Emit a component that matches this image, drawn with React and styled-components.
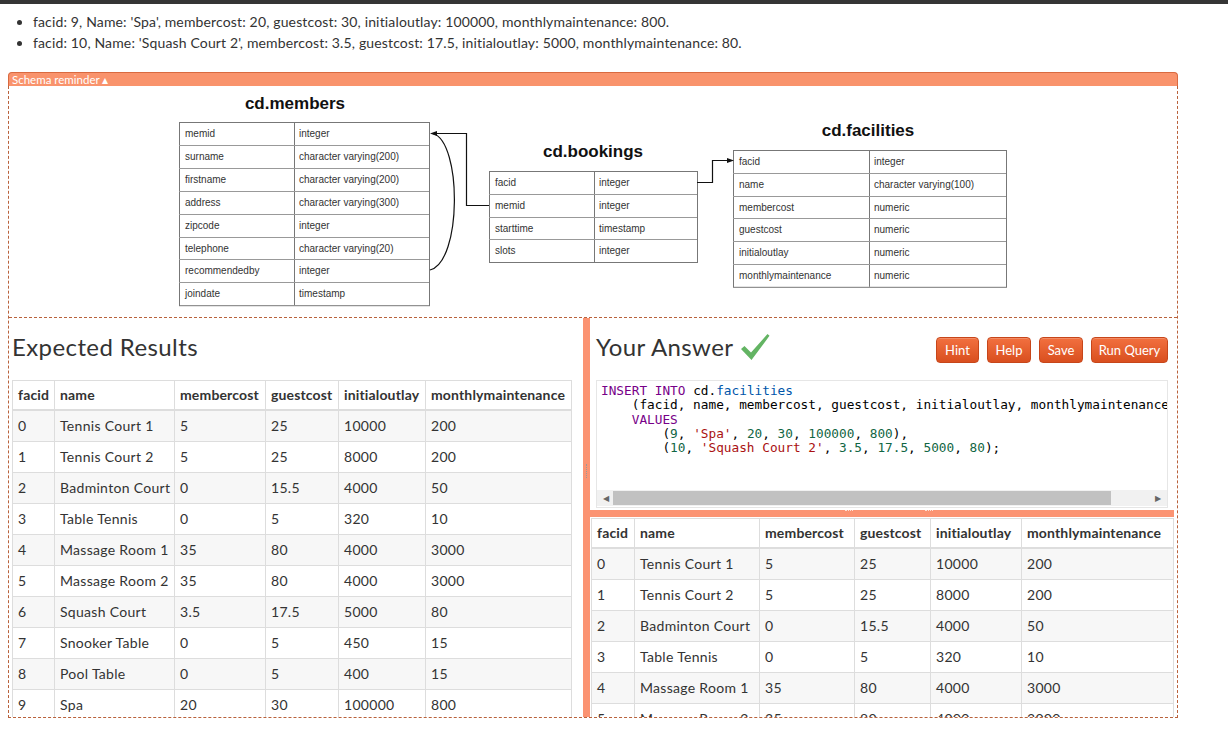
import React from "react";
import styled, { createGlobalStyle } from "styled-components";

const GlobalStyle = createGlobalStyle`
  body {
    margin: 0;
    background: #fff;
    font-family: Lato, "Noto Sans", sans-serif;
    color: #333;
  }
`;

const members = [
  ["memid", "integer"],
  ["surname", "character varying(200)"],
  ["firstname", "character varying(200)"],
  ["address", "character varying(300)"],
  ["zipcode", "integer"],
  ["telephone", "character varying(20)"],
  ["recommendedby", "integer"],
  ["joindate", "timestamp"],
];

const bookings = [
  ["facid", "integer"],
  ["memid", "integer"],
  ["starttime", "timestamp"],
  ["slots", "integer"],
];

const facilities = [
  ["facid", "integer"],
  ["name", "character varying(100)"],
  ["membercost", "numeric"],
  ["guestcost", "numeric"],
  ["initialoutlay", "numeric"],
  ["monthlymaintenance", "numeric"],
];

const rows = [
  [0, "Tennis Court 1", 5, 25, 10000, 200],
  [1, "Tennis Court 2", 5, 25, 8000, 200],
  [2, "Badminton Court", 0, 15.5, 4000, 50],
  [3, "Table Tennis", 0, 5, 320, 10],
  [4, "Massage Room 1", 35, 80, 4000, 3000],
  [5, "Massage Room 2", 35, 80, 4000, 3000],
  [6, "Squash Court", 3.5, 17.5, 5000, 80],
  [7, "Snooker Table", 0, 5, 450, 15],
  [8, "Pool Table", 0, 5, 400, 15],
  [9, "Spa", 20, 30, 100000, 800],
  [10, "Squash Court 2", 3.5, 17.5, 5000, 80],
];

const headers = ["facid", "name", "membercost", "guestcost", "initialoutlay", "monthlymaintenance"];

const SchemaTable = ({ title, tx, ty, x, y, w, split, rowH, data }) => (
  <g>
    <text x={tx} y={ty} textAnchor="middle" fontFamily="Liberation Sans, Arial, sans-serif" fontWeight="bold" fontSize="17" fill="#111">
      {title}
    </text>
    <rect x={x + 0.5} y={y + 0.5} width={w} height={rowH * data.length} fill="#fff" stroke="#777" />
    <line x1={split + 0.5} y1={y} x2={split + 0.5} y2={y + rowH * data.length} stroke="#777" />
    {data.map((r, i) => (
      <g key={r[0]}>
        {i > 0 && <line x1={x} y1={Math.round(y + rowH * i) + 0.5} x2={x + w} y2={Math.round(y + rowH * i) + 0.5} stroke="#999" />}
        <text x={x + 6} y={y + rowH * i + 15} fontFamily="Liberation Sans, Arial, sans-serif" fontSize="10" fill="#333">{r[0]}</text>
        <text x={split + 5} y={y + rowH * i + 15} fontFamily="Liberation Sans, Arial, sans-serif" fontSize="10" fill="#333">{r[1]}</text>
      </g>
    ))}
  </g>
);

const SchemaDiagram = () => (
  <svg width="1168" height="231" viewBox="9 86 1168 231">
    <SchemaTable title="cd.members" tx={295} ty={109} x={179} y={122} w={250} split={294} rowH={22.9} data={members} />
    <SchemaTable title="cd.bookings" tx={593} ty={157} x={489} y={171} w={208} split={594} rowH={22.75} data={bookings} />
    <SchemaTable title="cd.facilities" tx={868} ty={136} x={733} y={150} w={273} split={869} rowH={22.8} data={facilities} />
    <path d="M489 205.5 H466.5 V133.5 H436" fill="none" stroke="#111" strokeWidth="1.2" />
    <path d="M430 133.5 L437 131 L437 136 Z" fill="#111" />
    <path d="M430 270 C462 262 462 142 433 133.5" fill="none" stroke="#111" strokeWidth="1.2" />
    <path d="M697 182.5 H712.5 V160.5 H728" fill="none" stroke="#111" strokeWidth="1.2" />
    <path d="M734 160.5 L727 158 L727 163 Z" fill="#111" />
  </svg>
);

const Page = styled.div`
  width: 1228px;
  height: 735px;
  overflow: hidden;
`;

const TopBar = styled.div`
  height: 4px;
  background: #353535;
`;

const Goals = styled.ul`
  margin: 0;
  padding: 7px 0 0 33px;
  font-size: 14px;
  line-height: 21px;
  letter-spacing: 0.15px;
`;

const SchemaBar = styled.div`
  margin: 19px 0 0 8px;
  width: 1170px;
  height: 14px;
  box-sizing: border-box;
  background: #f9936c;
  border: 1px solid #d96a40;
  border-bottom: none;
  border-radius: 4px 4px 0 0;
  color: #fff;
  font-size: 11.5px;
  line-height: 13px;
  padding-left: 3px;
`;

const Frame = styled.div`
  margin-left: 8px;
  width: 1170px;
  height: 632px;
  box-sizing: border-box;
  border: 1px dashed #b9623c;
  border-top: none;
  overflow: hidden;
`;

const SchemaArea = styled.div`
  height: 231px;
  border-bottom: 1px dashed #b9623c;
`;

const Panes = styled.div`
  display: flex;
  height: 399px;
  overflow: hidden;
`;

const LeftPane = styled.div`
  width: 571px;
  padding-left: 3px;
  position: relative;
`;

const Grip = styled.div`
  position: absolute;
  right: -4px;
  top: 146px;
  height: 14px;
  border-left: 1px dotted #999;
`;

const VSplit = styled.div`
  width: 7px;
  flex-shrink: 0;
  background: #fb9372;
`;

const RightPane = styled.div`
  flex: 1;
  min-width: 0;
`;

const Heading = styled.h2`
  margin: 14px 0 18px;
  font-size: 24px;
  font-weight: 400;
  line-height: 30px;
  letter-spacing: 0.4px;
  color: #333;
`;

const AnswerHead = styled.div`
  display: flex;
  align-items: center;
  justify-content: space-between;
  margin: 14px 9px 18px 6px;
  height: 30px;
`;

const Title = styled.div`
  display: flex;
  align-items: center;
  gap: 7px;
  font-size: 24px;
  line-height: 30px;
  letter-spacing: 0.4px;
`;

const Buttons = styled.div`
  display: flex;
  gap: 8px;
  margin-top: 6px;
`;

const Button = styled.button`
  width: ${({ $w }) => $w}px;
  height: 26px;
  padding: 0;
  font-family: Lato, "Noto Sans", sans-serif;
  font-size: 13px;
  color: #fff;
  background: linear-gradient(#f2703f, #d94f1f);
  border: 1px solid #c7461a;
  border-radius: 4px;
  box-shadow: inset 0 1px 0 rgba(255, 255, 255, 0.2);
`;

const Editor = styled.div`
  margin: 0 9px 0 6px;
  height: 128px;
  box-sizing: border-box;
  border: 1px solid #e6e6e6;
  display: flex;
  flex-direction: column;
  overflow: hidden;
`;

const Code = styled.pre`
  flex: 1;
  margin: 0;
  padding: 3px 4px;
  font-family: "DejaVu Sans Mono", monospace;
  font-size: 12.75px;
  line-height: 14.3px;
  color: #000;
  overflow: hidden;
  white-space: pre;
`;

const Tok = styled.span`
  color: ${({ $c }) => $c};
`;

const HScroll = styled.div`
  height: 16px;
  margin-bottom: 1px;
  background: #f1f1f1;
  display: flex;
  align-items: center;
  padding: 0 6px;
  gap: 4px;
  font-size: 8px;
  color: #666;
`;

const Thumb = styled.div`
  width: 498px;
  height: 14px;
  background: #c1c1c1;
  margin-right: auto;
`;

const HSplit = styled.div`
  margin: 2px 3px 0 0;
  height: 7px;
  background: #fb9372;
  position: relative;
  &::before,
  &::after {
    content: "";
    position: absolute;
    top: 0;
    width: 8px;
    border-top: 1px dotted #fde0d5;
  }
  &::before { left: 255px; }
  &::after { left: 335px; }
`;

const TableWrap = styled.div`
  margin: ${({ $m }) => $m};
`;

const Table = styled.table`
  border-collapse: collapse;
  table-layout: fixed;
  font-size: 14px;
  line-height: 20px;
  color: #333;
  border: 1px solid #ddd;
`;

const Th = styled.th`
  text-align: left;
  font-weight: 700;
  padding: 4px 5px;
  border: 1px solid #ddd;
  border-bottom: 2px solid #ddd;
  white-space: nowrap;
  letter-spacing: 0.15px;
`;

const Tr = styled.tr`
  background: ${({ $odd }) => ($odd ? "#fff" : "#f7f7f7")};
`;

const Td = styled.td`
  padding: 5px 5px;
  border: 1px solid #ddd;
  white-space: nowrap;
  letter-spacing: 0.3px;
`;

const ResultTable = ({ widths }) => (
  <Table style={{ width: widths.reduce((a, b) => a + b, 0) }}>
    <colgroup>
      {widths.map((w, i) => (
        <col key={i} style={{ width: w }} />
      ))}
    </colgroup>
    <thead>
      <tr>
        {headers.map((h) => (
          <Th key={h}>{h}</Th>
        ))}
      </tr>
    </thead>
    <tbody>
      {rows.map((r, i) => (
        <Tr key={r[0]} $odd={i % 2 === 1}>
          {r.map((c, j) => (
            <Td key={j}>{c}</Td>
          ))}
        </Tr>
      ))}
    </tbody>
  </Table>
);

const Check = () => (
  <svg width="30" height="28" viewBox="0 0 30 28">
    <path d="M1 16 L4.5 13 L11 19.5 L27.5 1 L29.5 2.8 L11.5 27 Z" fill="#63b463" />
  </svg>
);

const K = "#770088";
const V = "#0055aa";
const S = "#aa1111";
const N = "#116644";

export default function App() {
  return (
    <Page>
      <GlobalStyle />
      <TopBar />
      <Goals>
        <li>facid: 9, Name: 'Spa', membercost: 20, guestcost: 30, initialoutlay: 100000, monthlymaintenance: 800.</li>
        <li>facid: 10, Name: 'Squash Court 2', membercost: 3.5, guestcost: 17.5, initialoutlay: 5000, monthlymaintenance: 80.</li>
      </Goals>
      <SchemaBar>Schema reminder ▴</SchemaBar>
      <Frame>
        <SchemaArea>
          <SchemaDiagram />
        </SchemaArea>
        <Panes>
          <LeftPane>
            <Heading>Expected Results</Heading>
            <ResultTable widths={[42, 120, 91, 73, 87, 146]} />
            <Grip />
          </LeftPane>
          <VSplit />
          <RightPane>
            <AnswerHead>
              <Title>
                Your Answer <Check />
              </Title>
              <Buttons>
                <Button $w={43}>Hint</Button>
                <Button $w={44}>Help</Button>
                <Button $w={44}>Save</Button>
                <Button $w={77}>Run Query</Button>
              </Buttons>
            </AnswerHead>
            <Editor>
              <Code>
                <Tok $c={K}>INSERT INTO</Tok> cd.<Tok $c={V}>facilities</Tok>
                {"\n    (facid, name, membercost, guestcost, initialoutlay, monthlymaintenance)\n    "}
                <Tok $c={K}>VALUES</Tok>
                {"\n        ("}<Tok $c={N}>9</Tok>, <Tok $c={S}>'Spa'</Tok>, <Tok $c={N}>20</Tok>, <Tok $c={N}>30</Tok>, <Tok $c={N}>100000</Tok>, <Tok $c={N}>800</Tok>),
                {"\n        ("}<Tok $c={N}>10</Tok>, <Tok $c={S}>'Squash Court 2'</Tok>, <Tok $c={N}>3.5</Tok>, <Tok $c={N}>17.5</Tok>, <Tok $c={N}>5000</Tok>, <Tok $c={N}>80</Tok>);
              </Code>
              <HScroll>
                <span>◀</span>
                <Thumb />
                <span>▶</span>
              </HScroll>
            </Editor>
            <HSplit />
            <TableWrap $m="1px 0 0 1px">
              <ResultTable widths={[43, 125, 95, 76, 91, 152]} />
            </TableWrap>
          </RightPane>
        </Panes>
      </Frame>
    </Page>
  );
}
